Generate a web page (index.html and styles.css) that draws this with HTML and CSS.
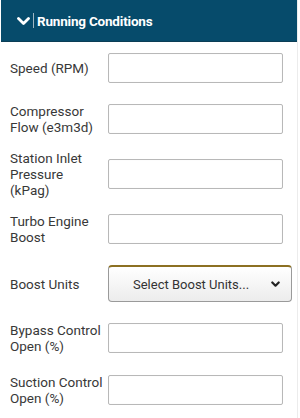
FILE: index.html
```html
<!DOCTYPE html>
<html>
<head>
<meta charset="utf-8">
<link rel="stylesheet" href="styles.css">
</head>
<body>
<div class="panel">
  <div class="header">
    <svg class="chev" width="13" height="9" viewBox="0 0 13 9"><path d="M1.5 1.5 L6.5 6.5 L11.5 1.5" fill="none" stroke="#fff" stroke-width="2.8" stroke-linecap="round" stroke-linejoin="round"/></svg>
    <span class="divider"></span>
    <span class="title">Running Conditions</span>
  </div>
  <div class="form">
    <div class="row"><label class="lbl">Speed (RPM)</label><input class="field" type="text"></div>
    <div class="row"><label class="lbl">Compressor<br>Flow (e3m3d)</label><input class="field" type="text"></div>
    <div class="row tall"><label class="lbl">Station Inlet<br>Pressure<br>(kPag)</label><input class="field" type="text"></div>
    <div class="row"><label class="lbl">Turbo Engine<br>Boost</label><input class="field" type="text"></div>
    <div class="row"><label class="lbl">Boost Units</label>
      <div class="select"><span class="sel-text">Select Boost Units...</span>
        <svg class="sel-chev" width="9" height="7" viewBox="0 0 9 7"><path d="M1.3 1.5 L4.5 4.7 L7.7 1.5" fill="none" stroke="#222" stroke-width="2.2" stroke-linecap="round" stroke-linejoin="round"/></svg>
      </div>
    </div>
    <div class="row"><label class="lbl">Bypass Control<br>Open (%)</label><input class="field" type="text"></div>
    <div class="row"><label class="lbl">Suction Control<br>Open (%)</label><input class="field" type="text"></div>
  </div>
</div>
</body>
</html>
```

FILE: styles.css
```css
html, body {
  margin: 0;
  padding: 0;
  background: #fff;
}
body {
  font-family: Roboto, "Liberation Sans", sans-serif;
  width: 300px;
  height: 418px;
  overflow: hidden;
}
.panel {
  margin: 0 2px 0 1px;
  border-right: 1px solid #ececec;
  min-height: 418px;
  box-sizing: border-box;
}
.header {
  height: 42px;
  background: #064b6b;
  border-bottom: 1px solid #0b3e56;
  box-sizing: border-box;
  display: flex;
  align-items: center;
  padding-left: 16px;
}
.chev {
  display: block;
  margin-top: 1px;
}
.divider {
  width: 1px;
  height: 15px;
  background: #9fb6c3;
  margin: 0 3px 0 3px;
}
.title {
  color: #fff;
  font-weight: bold;
  font-size: 13.5px;
  letter-spacing: -0.2px;
}
.form {
  display: flex;
  flex-direction: column;
  gap: 20px;
  padding: 11px 0 0 9px;
}
.row {
  display: flex;
  align-items: center;
}
.tall .lbl {
  margin: -5px 0;
}
.lbl {
  width: 98px;
  font-size: 13.5px;
  line-height: 16px;
  color: #383838;
}
.field {
  width: 175px;
  height: 30px;
  box-sizing: border-box;
  border: 1px solid #b8b8b8;
  border-radius: 2px;
  background: #fff;
  margin: 0;
  padding: 0 6px;
  box-shadow: inset 0 0 1px rgba(0,0,0,0.08);
}
.select {
  width: 184px;
  height: 37px;
  box-sizing: border-box;
  border: 1px solid #9a9a9a;
  border-top: 2px solid #8c7022;
  border-radius: 4px;
  background: linear-gradient(#ffffff, #ececec);
  display: flex;
  align-items: center;
  padding: 0 0 0 24px;
}
.sel-text {
  font-size: 13px;
  color: #333;
  flex: 1;
}
.sel-chev {
  display: block;
  margin-right: 11px;
}
```
